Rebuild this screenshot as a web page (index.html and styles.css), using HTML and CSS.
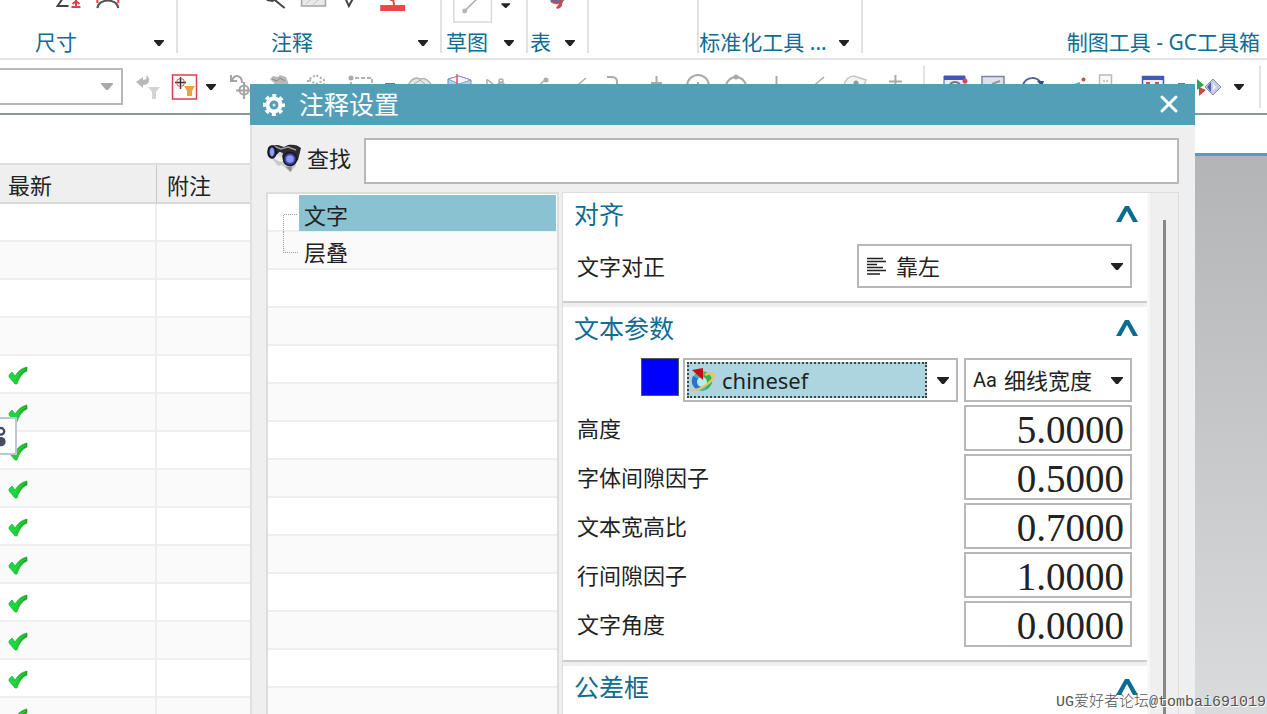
FILE: index.html
```html
<!DOCTYPE html>
<html lang="zh-CN">
<head>
<meta charset="utf-8">
<title>注释设置</title>
<link rel="stylesheet" href="styles.css">
</head>
<body>
<svg class="defs" aria-hidden="true">
  <defs>
    <symbol id="caret" viewBox="0 0 12 7"><path d="M0 0h12v1L7 7H5L0 1z"/></symbol>
    <symbol id="up" viewBox="0 0 22 18"><path d="M0 17L9 1h4l9 16h-5L11 6 5 17z"/></symbol>
    <linearGradient id="leaf" x1="0" x2="1" y1="0" y2="0"><stop offset="0" stop-color="#14e04a"/><stop offset=".5" stop-color="#1fcb33"/><stop offset="1" stop-color="#129c1c"/></linearGradient>
    <symbol id="check" viewBox="0 0 20 19"><path d="M1 9L4 6l3 4C10 5 14 2 19 1v4C14 7 11 12 9 18H7L1 11z" fill="url(#leaf)" stroke="#12a826" stroke-width=".6"/><path d="M7 13C10 8 13 5 18 3" fill="none" stroke="#35d744" stroke-width="1"/></symbol>
  </defs>
</svg>

<header class="ribbon">
  <section class="group group-size">
    <svg class="strip" viewBox="-30 0 207 30"><g fill="none" stroke-width="2"><path d="M66-6L58 6h11" stroke="#444"/><path d="M72 7h9M76.500 7V-2M73 4l3.500-3L80 4" stroke="#d9434e"/><path d="M98 8c1-10 20-10 21 0" stroke="#555"/><path d="M98-2v5M119-2v5" stroke="#d9434e"/></g></svg>
    <div class="foot"><span class="name">尺寸</span><button class="drop" aria-label="尺寸 更多"><svg class="caret"><use href="#caret"/></svg></button></div>
  </section>
  <section class="group group-note">
    <svg class="strip" viewBox="178 0 263 30"><path d="M267 0l7 1M274-1l11 9" stroke="#444" stroke-width="2"/><path d="M302-5h24V6h-24z" fill="#e9e9e9" stroke="#a4a4a4" stroke-width="1.500"/><path d="M306 4l8-7M313 5l9-8" stroke="#c4c4c4"/><path d="M345-4l4.500 10L355-4" fill="none" stroke="#444" stroke-width="2"/><path d="M381 5h25v6h-25z" fill="#f04545"/><path d="M391 0h3l1 5" fill="none" stroke="#f04545" stroke-width="2"/></svg>
    <div class="foot"><span class="name">注释</span><button class="drop" aria-label="注释 更多"><svg class="caret"><use href="#caret"/></svg></button></div>
  </section>
  <section class="group group-sketch">
    <svg class="strip" viewBox="442 0 85 30"><path d="M454-2h38v24h-38z" fill="#fff" stroke="#d9d9d9" stroke-width="1.500"/><path d="M465 11L479-3" stroke="#aaa" stroke-width="1.500"/><circle cx="465" cy="11" r="2.500" fill="#b5b5b5"/><path d="M502 3h9v1l-4 4h-1l-4-4z" fill="#222"/></svg>
    <div class="foot"><span class="name">草图</span><button class="drop" aria-label="草图 更多"><svg class="caret"><use href="#caret"/></svg></button></div>
  </section>
  <section class="group group-table">
    <svg class="strip" viewBox="528 0 60 30"><path d="M551 1c3-1 7 0 9 1l5-4" fill="none" stroke="#616b91" stroke-width="3"/><path d="M553 2l6 1M560 2c4 3-1 6-3 5M563-2c0 5-3 6-4 9" fill="none" stroke="#c94856" stroke-width="2.500"/></svg>
    <div class="foot"><span class="name">表</span><button class="drop" aria-label="表 更多"><svg class="caret"><use href="#caret"/></svg></button></div>
  </section>
  <section class="group group-blank"></section>
  <section class="group group-std">
    <div class="strip"></div>
    <div class="foot"><span class="name">标准化工具 ...</span><button class="drop" aria-label="标准化工具 更多"><svg class="caret"><use href="#caret"/></svg></button></div>
  </section>
  <section class="group group-gc">
    <div class="strip"></div>
    <div class="foot"><span class="name">制图工具 - GC工具箱</span></div>
  </section>
</header>

<nav class="toolbar">
  <div class="filter"><select aria-label="选择过滤器" disabled><option></option></select><svg class="caret"><use href="#caret"/></svg></div>
  <button class="tool" aria-label="重置过滤器"><svg viewBox="127 60 40 54"><path d="M136 82l7-5v3c4 0 4-3 3-5 5 3 4 10-3 10v3z" fill="#b9b9b9"/><path d="M148 87h12l-4 5v7h-4v-7z" fill="#d4d4d4"/></svg></button>
  <button class="tool snap" aria-label="捕捉过滤器"><svg viewBox="167 60 34 54"><path d="M172.500 75h24v24h-24z" fill="#fff" stroke="#d8404f" stroke-width="1.500"/><path d="M180.500 77v12M175 82.500h11" stroke="#333" stroke-width="1.500"/><circle cx="180.500" cy="82.500" r="4" fill="none" stroke="#d44b58"/><path d="M184 86h11l-3 5v5h-5v-5z" fill="#e7a72e"/></svg></button>
  <button class="more" aria-label="更多过滤器"><svg class="caret small"><use href="#caret"/></svg></button>
  <button class="tool" aria-label="撤销选择"><svg viewBox="220 60 40 54" fill="none" stroke="#a5a5a5" stroke-width="2"><path d="M230 75v6h6M231 80c3-6 10-5 10 3"/><circle cx="243" cy="90" r="4.500"/><path d="M243 82v17M235 90.500h16"/></svg></button>
  <button class="tool" aria-label="高亮"><svg viewBox="260 60 40 54"><path d="M269 79l3-3 5 1 2-2 6 2 2 5 1 5h-4l-3-3-5 3-3-4z" fill="#b8b8b8"/><path d="M271 79l5 2 3-3 5 3" stroke="#888" fill="none"/></svg></button>
  <button class="tool" aria-label="套索"><svg viewBox="300 60 40 54"><path d="M307 86v-6l8-5 8 5v6M308 80l7 4 8-4" fill="none" stroke="#aaa" stroke-width="2" stroke-dasharray="2 2"/></svg></button>
  <button class="tool" aria-label="矩形选择"><svg viewBox="340 60 40 54"><path d="M350 86v-8h21v8" fill="none" stroke="#999" stroke-width="1.500" stroke-dasharray="4 2"/><circle cx="350" cy="78" r="2.500" fill="#aaa"/></svg></button>
  <button class="more" aria-label="选择方式"><svg viewBox="380 60 20 54"><path d="M384 83h10v2h-10z" fill="#777"/></svg></button>
  <button class="tool" aria-label="着色"><svg viewBox="400 60 40 54"><path d="M407 85c4-7 8-8 12-6 5-2 8 1 11 5" fill="#e6e6e6" stroke="#b5b5b5" stroke-width="1.500"/><path d="M413 84l6-4 6 5" fill="none" stroke="#aaa"/></svg></button>
  <button class="tool" aria-label="视图方块"><svg viewBox="440 60 40 54"><path d="M447 79l11-3 12 4v9h-23z" fill="#a9d8f1" stroke="#7480ba"/><path d="M447 79l11-3 12 4-12 4z" fill="#edf7fc" stroke="#8f97c4"/><path d="M456 74v12" stroke="#d85a69" stroke-width="1.500"/></svg></button>
  <button class="tool" aria-label="曲线"><svg viewBox="480 60 40 54" fill="none" stroke="#aaa" stroke-width="1.500"><path d="M486 79v7M487 80l7 6M494 86l6-4 6 4"/><circle cx="500" cy="81" r="2"/></svg></button>
  <button class="tool" aria-label="端点"><svg viewBox="520 60 40 54"><path d="M534 89l10-9" stroke="#aaa" stroke-width="1.500"/><circle cx="545" cy="80" r="2.500" fill="#aaa"/></svg></button>
  <button class="tool" aria-label="中点"><svg viewBox="560 60 40 54"><path d="M572 89l13-11" stroke="#aaa" stroke-width="1.500"/></svg></button>
  <button class="tool" aria-label="控制点"><svg viewBox="600 60 40 54"><path d="M606 77h5q5 0 5 5v5" fill="none" stroke="#aaa" stroke-width="2"/></svg></button>
  <button class="tool" aria-label="交点"><svg viewBox="640 60 40 54"><path d="M655.500 76v12M650 83h11" stroke="#aaa" stroke-width="2"/></svg></button>
  <button class="tool" aria-label="圆心"><svg viewBox="680 60 40 54" fill="none" stroke="#aaa" stroke-width="2"><circle cx="697" cy="86" r="11"/><path d="M697 82v8"/></svg></button>
  <button class="tool" aria-label="象限点"><svg viewBox="720 60 40 54"><circle cx="735" cy="87" r="10" fill="none" stroke="#aaa" stroke-width="2"/><circle cx="735" cy="77" r="2.500" fill="#aaa"/></svg></button>
  <button class="tool" aria-label="存在点"><svg viewBox="760 60 40 54"><path d="M775.500 76v14" stroke="#aaa" stroke-width="2"/></svg></button>
  <button class="tool" aria-label="相切"><svg viewBox="800 60 40 54"><path d="M809 89l14-12" stroke="#aaa" stroke-width="1.500"/></svg></button>
  <button class="tool" aria-label="面上的点"><svg viewBox="840 60 40 54"><path d="M843 85c1-5 5-9 10-9l12 4-3 8" fill="#f4f4f4" stroke="#c5c5c5" stroke-width="1.500"/><circle cx="855" cy="83" r="2.500" fill="#999"/></svg></button>
  <button class="tool" aria-label="增量"><svg viewBox="880 60 40 54"><path d="M894.500 75v12M888 81.500h13" stroke="#aaa" stroke-width="2"/></svg></button>
  <span class="rule"></span>
  <button class="tool" aria-label="窗口"><svg viewBox="936 60 40 54"><path d="M945 76h21v14h-21z" fill="#eef" stroke="#4156b8"/><path d="M945 76h21v4h-21z" fill="#4156b8"/><path d="M951 84q5-4 10 0" stroke="#777" stroke-width="2" fill="none"/><circle cx="966" cy="81" r="2.500" fill="#d84a4a"/></svg></button>
  <button class="tool" aria-label="图像"><svg viewBox="976 60 40 54"><path d="M983 76.500h22V92h-22z" fill="#dfe2ec" stroke="#7b82ad" stroke-width="1.500"/><path d="M993 84l8-3" stroke="#999" stroke-width="2"/></svg></button>
  <button class="tool" aria-label="旋转"><svg viewBox="1016 60 40 54"><path d="M1024 85c3-9 15-9 18-1" fill="none" stroke="#56609a" stroke-width="2"/><path d="M1038 81h7l-2 6z" fill="#3f4a82"/></svg></button>
  <button class="tool" aria-label="直线"><svg viewBox="1056 60 40 54"><path d="M1075 85l6-2" stroke="#999" stroke-width="2"/><circle cx="1084.500" cy="79.500" r="2" fill="#d84a4a"/></svg></button>
  <button class="tool" aria-label="文档"><svg viewBox="1096 60 40 54"><path d="M1100.500 75h12v14h-12z" fill="#f8f8f8" stroke="#bbb" stroke-width="1.500"/><path d="M1104 81h5" stroke="#999" stroke-dasharray="2 1"/></svg></button>
  <button class="tool" aria-label="表格"><svg viewBox="1136 60 40 54"><path d="M1143.500 76.500h21V92h-21z" fill="#eef" stroke="#4358bd" stroke-width="1.500"/><path d="M1143 76h22v4h-22z" fill="#4358bd"/><path d="M1147 82h4v5h-4zM1156 82h4v5h-4z" fill="#d95046"/></svg></button>
  <button class="more" aria-label="表格选项"><svg viewBox="1176 60 20 54"><path d="M1179 83h7v2h-7z" fill="#777"/></svg></button>
  <button class="tool play" aria-label="播放"><svg viewBox="1196 60 34 54"><path d="M1198 79l7 6-7 5z" fill="#2aa84a"/><path d="M1200 87l7 3-7 6z" fill="#d04747"/><path d="M1206 87l8-8 8 8-8 8z" fill="#c7cbe3" stroke="#8890a6"/><path d="M1212 82l-4 5 4 5z" fill="#5260a8"/><path d="M1214 83l3 4-3 4z" fill="#eef"/></svg></button>
  <button class="more" aria-label="播放选项"><svg class="caret small"><use href="#caret"/></svg></button>
  <span class="rule rule-last"></span>
</nav>

<main class="workspace">
  <div class="listing">
    <table class="grid">
      <thead><tr><th class="c-new">最新</th><th>附注</th></tr></thead>
      <tbody>
        <tr><td></td><td></td></tr>
        <tr><td></td><td></td></tr>
        <tr><td></td><td></td></tr>
        <tr><td></td><td></td></tr>
        <tr><td><svg class="check"><use href="#check"/></svg></td><td></td></tr>
        <tr><td><svg class="check"><use href="#check"/></svg></td><td></td></tr>
        <tr><td><svg class="check"><use href="#check"/></svg></td><td></td></tr>
        <tr><td><svg class="check"><use href="#check"/></svg></td><td></td></tr>
        <tr><td><svg class="check"><use href="#check"/></svg></td><td></td></tr>
        <tr><td><svg class="check"><use href="#check"/></svg></td><td></td></tr>
        <tr><td><svg class="check"><use href="#check"/></svg></td><td></td></tr>
        <tr><td><svg class="check"><use href="#check"/></svg></td><td></td></tr>
        <tr><td><svg class="check"><use href="#check"/></svg></td><td></td></tr>
        <tr><td><svg class="check"><use href="#check"/></svg></td><td></td></tr>
      </tbody>
    </table>
  </div>
  <div class="canvas"></div>
</main>

<button class="handle" aria-label="展开"><svg viewBox="0 0 16 36"><circle cx="1" cy="13" r="3.500" fill="none" stroke="#474b5e" stroke-width="2.500"/><circle cx="1" cy="24" r="5" fill="#474b5e"/></svg></button>

<section class="dialog" role="dialog" aria-labelledby="dlg-title">
  <header class="titlebar">
    <svg class="gear" viewBox="0 0 22 22"><circle cx="11" cy="11" r="6.500" fill="none" stroke="#fff" stroke-width="4"/><circle cx="11" cy="11" r="9.500" fill="none" stroke="#fff" stroke-width="3" stroke-dasharray="4 3.460" stroke-dashoffset="2"/><circle cx="11" cy="11" r="1.500" fill="#d3e8ef"/></svg>
    <h1 id="dlg-title">注释设置</h1>
    <button class="close" aria-label="关闭"><svg viewBox="0 0 20 20"><path d="M3 3l14 14M17 3L3 17" stroke="#fff" stroke-width="3" stroke-linecap="round"/></svg></button>
  </header>
  <div class="content">
    <div class="search">
      <svg class="glass" viewBox="0 0 36 30"><path d="M4 13l10 6 13-4 3 8-6 6-8-7-4 1z" fill="#c9c9c9"/><path d="M2 5c3-3 7-3 10-3l6 2 4-2c5-1 10 0 13 3l-3 12-5 5-10-5-2-8-7 4-6-1z" fill="#2b2b31"/><path d="M8 3l7 3 7-2 8 3" fill="none" stroke="#9a9aa2" stroke-width="1.500"/><path d="M13 9l4 1-1 4-5-1z" fill="#d9d9d9"/><ellipse cx="6" cy="9" rx="4" ry="6" fill="#3c3f86" stroke="#111" stroke-width="1.500"/><ellipse cx="6" cy="9" rx="2" ry="4" fill="#92a0f6"/><circle cx="24" cy="16" r="6.500" fill="#4046a3" stroke="#17171c" stroke-width="1.500"/><circle cx="24" cy="16" r="3.800" fill="#8c97fa"/><path d="M20 24l6-1-1 6z" fill="#888"/></svg>
      <label for="find">查找</label>
      <input id="find" type="text">
    </div>
    <div class="panes">
      <ul class="tree">
        <li><svg class="branch" viewBox="0 0 31 38"><path d="M15.500 38V20.500H30" /></svg><a class="node on" href="#text">文字</a></li>
        <li><svg class="branch" viewBox="0 0 31 38"><path d="M15.500 0v20.500H30" /></svg><a class="node" href="#stack">层叠</a></li>
        <li></li><li></li><li></li><li></li><li></li><li></li><li></li><li></li><li></li><li></li><li></li><li></li>
      </ul>
      <div class="detail">
        <div class="sections">
          <section class="block">
            <div class="head"><h2>对齐</h2><button class="fold" aria-label="折叠 对齐"><svg><use href="#up"/></svg></button></div>
            <div class="row">
              <label for="just">文字对正</label>
              <div class="combo wide">
                <svg class="lines" viewBox="0 0 19 19"><path d="M0 1.500h16M0 4.500h19M0 7.500h10M0 10.500h16M0 13.500h19M0 17h13" stroke="#222" stroke-width="1.500"/></svg>
                <select id="just"><option>靠左</option></select>
                <svg class="caret"><use href="#caret"/></svg>
              </div>
            </div>
          </section>
          <section class="block">
            <div class="head"><h2>文本参数</h2><button class="fold" aria-label="折叠 文本参数"><svg><use href="#up"/></svg></button></div>
            <div class="row fonts">
              <button class="swatch" aria-label="颜色"></button>
              <div class="combo wide picked">
                <div class="focus">
                  <svg class="globe" viewBox="0 0 26 26"><circle cx="12" cy="14" r="10" fill="#3fb7a4"/><path d="M3 9a10 10 0 0 0 5 14l4-3-5-9z" fill="#2e6fd1"/><path d="M14 5c6 1 9 6 8 11l-5 6-3-6z" fill="#35b34b"/><circle cx="12" cy="15" r="5" fill="#b7efe8"/><path d="M2 23c6 1 20-7 22-14 0-4-6-3-9-1" fill="none" stroke="#e9c36b" stroke-width="2.500"/><path d="M2 3l11-2v12z" fill="#c40d12"/></svg>
                  <select aria-label="字体"><option>chinesef</option></select>
                </div>
                <svg class="caret"><use href="#caret"/></svg>
              </div>
              <div class="combo narrow">
                <span class="aa">Aa</span>
                <select aria-label="线宽"><option>细线宽度</option></select>
                <svg class="caret"><use href="#caret"/></svg>
              </div>
            </div>
            <div class="row value"><label for="v1">高度</label><input id="v1" type="text" value="5.0000"></div>
            <div class="row value"><label for="v2">字体间隙因子</label><input id="v2" type="text" value="0.5000"></div>
            <div class="row value"><label for="v3">文本宽高比</label><input id="v3" type="text" value="0.7000"></div>
            <div class="row value"><label for="v4">行间隙因子</label><input id="v4" type="text" value="1.0000"></div>
            <div class="row value"><label for="v5">文字角度</label><input id="v5" type="text" value="0.0000"></div>
          </section>
          <section class="block last">
            <div class="head"><h2>公差框</h2><button class="fold" aria-label="折叠 公差框"><svg><use href="#up"/></svg></button></div>
          </section>
        </div>
        <div class="scroll"><div class="thumb"></div></div>
      </div>
    </div>
  </div>
</section>

<p class="credit">UG爱好者论坛@tombai691019</p>
</body>
</html>
```
FILE: styles.css
```css
* { box-sizing: border-box; }
html, body { height: 100%; }
body {
  margin: 0;
  display: flex;
  flex-direction: column;
  position: relative;
  overflow: hidden;
  background: #fff;
  color: #222;
  font-family: "Noto Sans", "Noto Sans CJK SC", sans-serif;
  font-size: 22px;
}
button { border: 0; padding: 0; background: none; }
select, input { font: inherit; color: inherit; border-radius: 0; outline: 0; }
select { appearance: none; border: 0; background: none; padding: 0; }
h1, h2, p, ul { margin: 0; padding: 0; font-weight: 400; }
svg { display: block; flex: none; }
.defs { position: absolute; width: 0; height: 0; }
.caret { width: 12px; height: 7px; fill: #222; pointer-events: none; }

/* ribbon */
.ribbon { display: flex; flex: none; height: 60px; border-bottom: 2px solid #e4e4e4; }
.group { flex: none; height: 53px; border-right: 2px solid #e2e2e2; display: flex; flex-direction: column; }
.group-size { width: 208px; margin-left: -30px; }
.group-note { width: 264px; }
.group-sketch { width: 86px; }
.group-table { width: 61px; }
.group-blank { width: 110px; }
.group-std { width: 164px; }
.group-gc { flex: 1; border: 0; padding-right: 7px; }
.strip { height: 27px; width: 100%; flex: none; overflow: hidden; }
svg.strip { height: 30px; margin-bottom: -3px; }
.foot { display: flex; height: 31px; align-items: center; }
.name { flex: 1; text-align: center; white-space: nowrap; color: #0f6c92; font-size: 21px; line-height: 31px; }
.group-gc .name { text-align: right; }
.drop { width: 34px; display: flex; justify-content: center; }
.drop .caret, .small { width: 10px; height: 6px; }

/* selection toolbar */
.toolbar { display: flex; flex: none; align-items: center; height: 55px; border-bottom: 2px solid #8b979b; }
.filter { width: 123px; height: 37px; margin-right: 4px; border: 2px solid #b9b9b9; border-left: 0; display: flex; align-items: center; padding-right: 8px; }
.filter select { flex: 1; min-width: 0; }
.filter .caret { fill: #aaa; }
.tool { width: 40px; flex: none; }
.tool svg, .more svg:not(.caret) { width: 100%; height: 54px; }
.snap { width: 34px; }
.play { width: 34px; }
.more { width: 20px; flex: none; display: flex; justify-content: center; }
.rule { width: 2px; height: 42px; margin: 0 10px 0 2px; background: #e2e2e2; flex: none; }
.rule-last { margin: 0 0 0 10px; }

/* workspace */
.workspace { flex: 1; display: flex; min-height: 0; }
.listing { width: 260px; flex: none; padding-top: 48px; overflow: hidden; }
.grid { width: 100%; border-collapse: separate; border-spacing: 0; table-layout: fixed; border-top: 2px solid #ddd; }
.grid th { height: 39px; padding: 2px 10px 0; text-align: left; font-weight: 400; line-height: 32px; background: #efefef; border-right: 1px solid #c8c8c8; border-bottom: 2px solid #d8d8d8; }
.grid .c-new { width: 157px; padding-left: 8px; }
.grid td { height: 38px; padding: 2px 8px 0; line-height: 0; border-right: 2px solid #eee; border-bottom: 2px solid #eee; }
.grid tbody tr:nth-child(even) { background: #fafafa; }
.check { width: 20px; height: 19px; }
.canvas { flex: 1; margin-top: 38px; border-top: 3px solid #549fb8; background: linear-gradient(#b3b4b6, #dadbdd); }
.handle { position: absolute; left: 0; top: 417px; width: 17px; height: 38px; background: #fff; border: 2px solid #b9c9d4; border-left: 0; }
.handle svg { width: 15px; height: 34px; }

/* dialog */
.dialog { position: absolute; left: 250px; right: 72px; top: 84px; bottom: 0; background: #efefef; display: flex; flex-direction: column; }
.titlebar { flex: none; height: 41px; background: #549fb8; color: #fff; display: flex; align-items: center; padding: 0 16px 0 13px; }
.gear { width: 22px; height: 22px; margin-right: 14px; }
.titlebar h1 { flex: 1; font-size: 25px; line-height: 41px; }
.close { width: 20px; margin-bottom: 2px; }
.close svg { width: 20px; height: 20px; }
.content { flex: 1; min-height: 0; display: flex; flex-direction: column; gap: 8px; padding: 13px 16px 0 14px; border-left: 2px solid #e0e0e0; }
.search { display: flex; align-items: center; height: 46px; flex: none; }
.glass { width: 36px; height: 30px; margin: 0 5px 6px 0; }
.search label { width: 57px; line-height: 40px; padding-bottom: 6px; flex: none; }
.search input { flex: 1; min-width: 0; height: 46px; border: 2px solid #b8b8b8; background: #fff; }
.panes { flex: 1; min-height: 0; display: flex; gap: 3px; }
.tree { list-style: none; width: 293px; flex: none; overflow: hidden; background: #fff; border: 2px solid #ddd; border-bottom: 0; }
.tree li { height: 38px; display: flex; border-bottom: 2px solid #eee; padding-right: 1px; }
.tree li:nth-child(even) { background: #fafafa; }
.branch { width: 31px; height: 38px; fill: none; stroke: #999; stroke-dasharray: 1 1; }
.node { flex: 1; height: 36px; padding-left: 5px; line-height: 41px; color: #222; text-decoration: none; }
.on { background: #8bc2d1; height: 37px; border-top: 1px solid #fff; line-height: 40px; }

.detail { flex: 1; min-width: 0; display: flex; border: 1px solid #ddd; border-bottom: 0; overflow: hidden; }
.sections { flex: 1; min-width: 0; }
.block { background: #fff; padding: 0 15px 13px 14px; border-bottom: 2px solid #ccc; margin-bottom: 4px; }
.last { height: 80px; border: 0; margin: 0; }
.head { display: flex; align-items: center; height: 44px; margin: 0 -6px 7px -3px; }
.head h2 { flex: 1; font-size: 25px; line-height: 42px; padding-bottom: 2px; color: #0f6c92; }
.fold { padding-bottom: 3px; }
.fold svg { width: 22px; height: 18px; fill: #0a6d90; }
.row { display: flex; align-items: center; justify-content: space-between; }
.fonts { justify-content: flex-end; }
.row label { line-height: 44px; }
.combo { height: 44px; background: #fff; border: 2px solid #b8b8b8; display: flex; align-items: center; padding: 0 7px 0 8px; }
.combo select { flex: 1; min-width: 0; height: 40px; }
.wide { width: 275px; }
.narrow { width: 168px; margin-left: 6px; padding: 0 7px; }
.lines { width: 19px; height: 19px; margin-right: 10px; }
.swatch { width: 38px; height: 38px; background: #00f; border: 1px solid #555; margin-right: 4px; align-self: flex-start; }
.picked { padding: 0 7px 0 2px; gap: 10px; }
.focus { flex: 1; min-width: 0; height: 36px; display: flex; align-items: center; gap: 6px; padding-left: 1px; background: #add5e0; border: 2px dotted #444; }
.focus select { height: 32px; }
.globe { width: 26px; height: 26px; }
.aa { font-family: Roboto, "Liberation Sans", sans-serif; font-size: 20px; line-height: 38px; margin-right: 7px; }
.value { margin-top: 3px; }
.value input { width: 168px; height: 46px; padding: 3px 6px 0; text-align: right; border: 2px solid #b8b8b8; background: #fff; font-family: "Liberation Serif", serif; font-size: 39px; line-height: 39px; }

.scroll { width: 31px; flex: none; display: flex; padding: 27px 0 0 13px; border-left: 3px solid #f7f7f7; }
.thumb { width: 3px; background: #888; }

.credit { position: absolute; right: 1px; bottom: 1px; font-family: "Liberation Mono", "Noto Sans CJK SC", monospace; font-weight: 300; font-size: 15px; line-height: 20px; color: #555; text-shadow: 1px 1px #fff; }
```
